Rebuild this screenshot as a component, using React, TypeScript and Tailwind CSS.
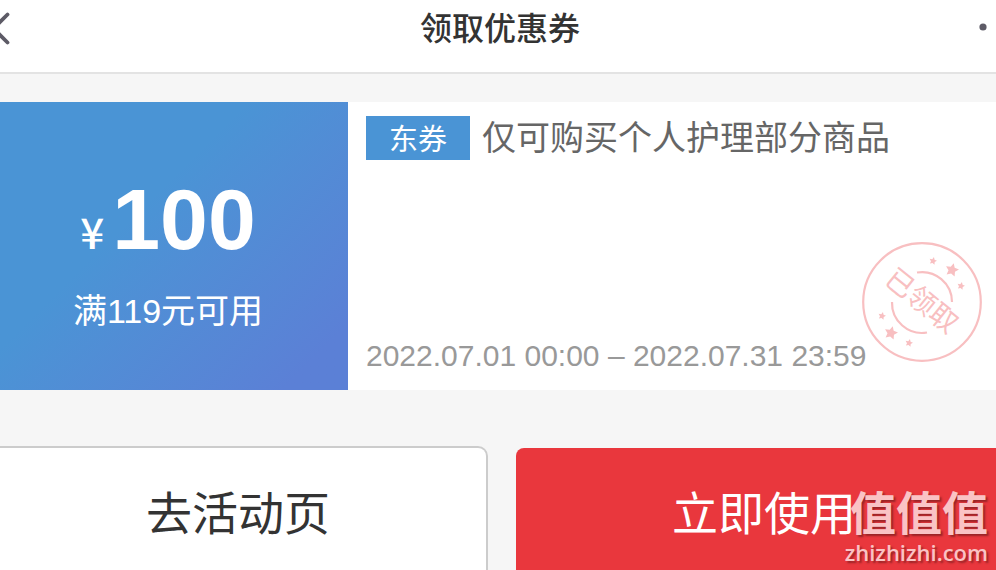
import React from 'react';

const STARS = [
  { x: 71, y: 19, r: 4 },
  { x: 90, y: 28, r: 7 },
  { x: 99, y: 44, r: 4 },
  { x: 20, y: 74, r: 4 },
  { x: 29, y: 91, r: 7 },
  { x: 47, y: 101, r: 4 },
];

const starPoints = (cx: number, cy: number, r: number) =>
  Array.from({ length: 10 }, (_, i) => {
    const radius = i % 2 === 0 ? r : r * 0.5;
    const angle = (i * Math.PI) / 5 - Math.PI / 2 + 0.25;
    return `${(cx + radius * Math.cos(angle)).toFixed(2)},${(cy + radius * Math.sin(angle)).toFixed(2)}`;
  }).join(' ');

const Stamp: React.FC = () => (
  <svg
    viewBox="0 0 120 120"
    className="absolute right-3.5 bottom-7 size-[120px] text-[#f8bfc1]"
    role="img"
    aria-label="已领取"
  >
    <circle cx="60" cy="60" r="58.8" fill="none" stroke="currentColor" strokeWidth="2.2" />
    <path
      d="M55 30.5A30 30 0 0 1 90 60M30 60A30 30 0 0 0 65 90.5"
      fill="none"
      stroke="currentColor"
      strokeWidth="2.2"
    />
    {STARS.map((s) => (
      <polygon key={`${s.x}-${s.y}`} points={starPoints(s.x, s.y, s.r)} fill="currentColor" />
    ))}
    <text
      x="59"
      y="69"
      textAnchor="middle"
      transform="rotate(39 60 60)"
      fill="currentColor"
      className="text-[28px]"
    >
      已领取
    </text>
  </svg>
);

const Header: React.FC = () => (
  <header className="flex h-[74px] items-center justify-between border-b-2 border-[#e3e3e3] bg-white pb-4">
    <button aria-label="返回" className="w-12">
      <svg viewBox="0 0 48 36" className="h-9 w-12" fill="none" stroke="#5d5b66" strokeWidth="3.8" strokeLinecap="round">
        <path d="M7.5 4.5L-6.5 18.5L7.5 32.5" />
      </svg>
    </button>
    <h1 className="pt-0.5 pl-1 text-[32px] leading-10 font-medium text-[#333]">领取优惠券</h1>
    <button aria-label="更多" className="w-12">
      <svg viewBox="0 0 48 36" className="h-9 w-12" fill="#5d5b66">
        <circle cx="35" cy="17" r="3.6" />
        <circle cx="53" cy="17" r="3.6" />
      </svg>
    </button>
  </header>
);

const Coupon: React.FC = () => (
  <section className="relative mt-7 flex h-72 bg-white">
    <div className="-ml-3 flex w-[360px] shrink-0 flex-col items-center justify-center bg-linear-135 from-[#4a94d5] from-40% to-[#5b80d6] to-90% pt-[18px] text-white">
      <p className="flex items-baseline gap-2 leading-[88px]">
        <span className="font-['Noto_Sans_CJK_SC',sans-serif] text-[42px] leading-12 font-medium">¥</span>
        <span className="text-[86px] font-bold">100</span>
      </p>
      <p className="mt-6 text-[34px] leading-12">满119元可用</p>
    </div>
    <div className="flex min-w-0 flex-1 flex-col justify-between py-3.5 pl-[18px]">
      <div className="flex items-center gap-3">
        <span className="flex h-11 w-[104px] items-center justify-center bg-[#4a94d5] pt-1.5 text-[29px] text-white">
          东券
        </span>
        <h2 className="text-[34px] leading-11 text-[#666]">仅可购买个人护理部分商品</h2>
      </div>
      <p className="text-[30px] leading-10 text-[#999]">2022.07.01 00:00 – 2022.07.31 23:59</p>
    </div>
    <Stamp />
  </section>
);

const Watermark: React.FC = () => (
  <div className="absolute right-2 bottom-1 flex flex-col items-end text-[#fac3c5] [text-shadow:2px_2px_2px_rgba(90,20,20,0.55)]">
    <span className="text-[46px] leading-12 font-bold">值值值</span>
    <span className="font-['Open_Sans',sans-serif] text-[22px] leading-7 font-semibold">zhizhizhi.com</span>
  </div>
);

const App: React.FC = () => {
  return (
    <div className="relative h-screen overflow-hidden bg-[#f6f6f6] font-['Liberation_Sans','Noto_Sans_CJK_SC',sans-serif]">
      <Header />
      <Coupon />
      <div className="mt-[58px] -mr-4 -ml-2.5 grid grid-cols-2 gap-[30px]">
        <button className="h-33 rounded-lg bg-white text-[46px] text-[#333] ring-2 ring-[#ccc]">去活动页</button>
        <button className="h-33 rounded-lg bg-[#e9373d] text-[46px] text-white">立即使用</button>
      </div>
      <Watermark />
    </div>
  );
};

export default App;
